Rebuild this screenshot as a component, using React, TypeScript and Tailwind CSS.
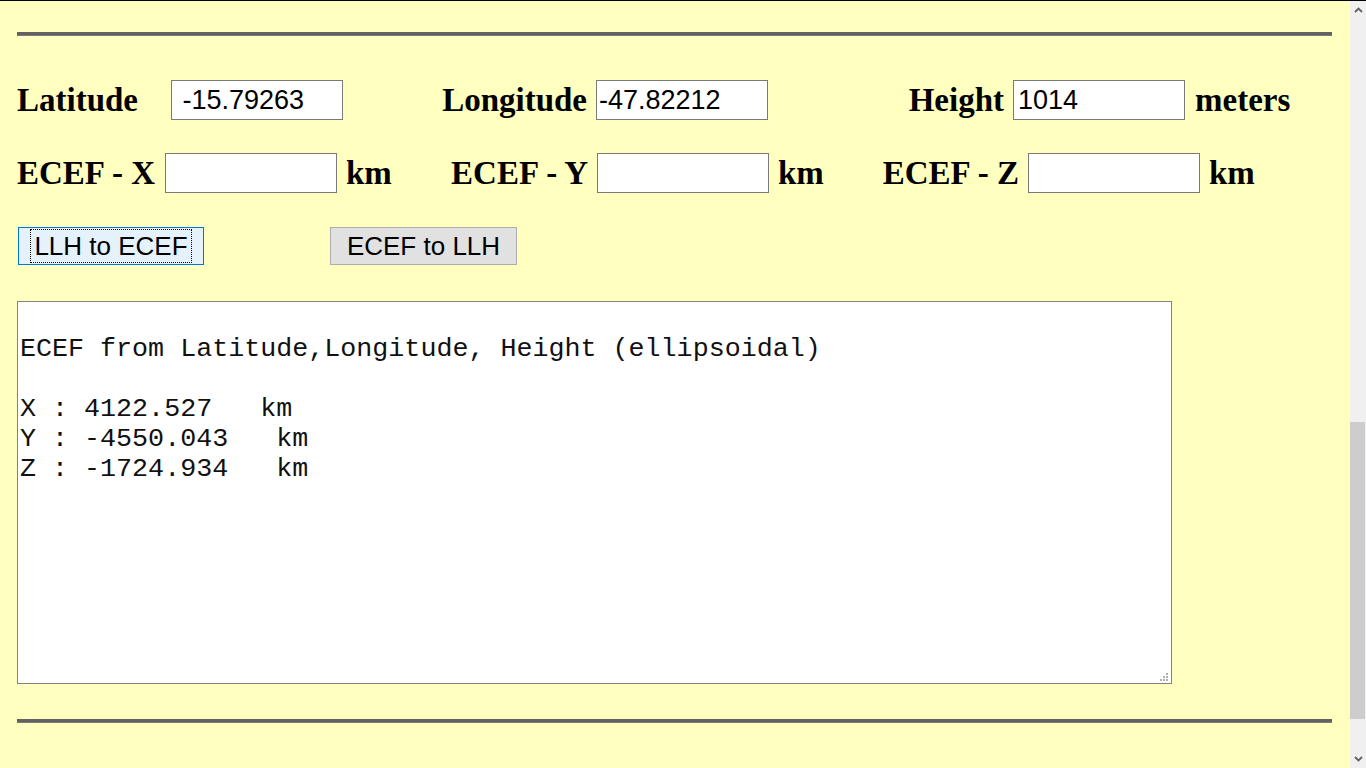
import React from "react";

const serif = "font-['Liberation_Serif',_'Times_New_Roman',_serif]";
const sans = "font-['Liberation_Sans',_Arial,_sans-serif]";

function Field({ value, pad = "pl-[3px]" }: { value?: string; pad?: string }) {
  return (
    <input
      type="text"
      defaultValue={value}
      className={`w-[172px] h-[40px] bg-white border border-[#7a7a7a] text-[27px] font-normal text-black outline-none ${pad} ${sans}`}
    />
  );
}

function Hr() {
  return <div className="h-[4px] bg-[#626262] border-b border-[#7a7a7a]" />;
}

function ScrollBar() {
  return (
    <div className="w-[16px] bg-[#f0f0f0] flex flex-col">
      <div className="h-[18px] flex items-center justify-center">
        <svg width="9" height="6" viewBox="0 0 9 6">
          <path d="M1 5 L4.5 1.5 L8 5" fill="none" stroke="#606060" strokeWidth="1.8" />
        </svg>
      </div>
      <div className="h-[403px]" />
      <div className="h-[297px] w-[15px] bg-[#cdcdcd]" />
      <div className="flex-1" />
      <div className="h-[18px] flex items-center justify-center">
        <svg width="9" height="6" viewBox="0 0 9 6">
          <path d="M1 1 L4.5 4.5 L8 1" fill="none" stroke="#606060" strokeWidth="1.8" />
        </svg>
      </div>
    </div>
  );
}

const output =
  "\nECEF from Latitude,Longitude, Height (ellipsoidal)\n\nX : 4122.527   km\nY : -4550.043   km\nZ : -1724.934   km";

export default function App() {
  return (
    <div className="w-[1366px] h-[768px] flex flex-col overflow-hidden">
      <div className="h-px bg-black" />
      <div className="flex flex-1">
        <div className="flex-1 bg-[#ffffc0] pl-[17px] pr-[18px] pt-[31px]">
          <Hr />

          <div className={`flex items-center mt-[44px] h-[40px] text-[33px] font-bold text-black ${serif}`}>
            <span className="w-[154px] pt-[2px]">Latitude</span>
            <Field value=" -15.79263" />
            <span className="w-[253px] text-right pr-[9px] pt-[2px]">Longitude</span>
            <Field value="-47.82212" pad="pl-[2px]" />
            <span className="w-[245px] text-right pr-[9px] pt-[2px]">Height</span>
            <Field value="1014" pad="pl-[4px]" />
            <span className="pl-[10px] pt-[2px]">meters</span>
          </div>

          <div className={`flex items-center mt-[33px] h-[40px] text-[33px] font-bold text-black ${serif}`}>
            <span className="w-[148px] pt-[2px]">ECEF - X</span>
            <Field />
            <span className="w-[260px] flex justify-between pl-[9px] pr-[9px] pt-[2px]">
              <span>km</span>
              <span>ECEF - Y</span>
            </span>
            <Field />
            <span className="w-[259px] flex justify-between pl-[9px] pr-[9px] pt-[2px]">
              <span>km</span>
              <span>ECEF - Z</span>
            </span>
            <Field />
            <span className="pl-[9px] pt-[2px]">km</span>
          </div>

          <div className={`flex items-center mt-[34px] pl-px ${sans}`}>
            <button className="w-[186px] h-[38px] bg-[#e5f1fb] border border-[#0078d7] text-[26px] text-black flex items-center justify-center">
              <span className="outline-1 outline-dotted outline-black px-[3px] leading-[32px]">LLH to ECEF</span>
            </button>
            <button className="ml-[126px] w-[187px] h-[38px] bg-[#e1e1e1] border border-[#adadad] text-[26px] text-black flex items-center justify-center">
              <span className="leading-[32px]">ECEF to LLH</span>
            </button>
          </div>

          <div className="relative mt-[36px] w-[1155px] h-[383px]">
            <textarea
              readOnly
              value={output}
              className="w-full h-full resize-none bg-white border border-[#828282] p-[2px] text-[26.7px] leading-[30px] text-[#111] outline-none font-['Liberation_Mono',_'Courier_New',_monospace]"
            />
            <svg className="absolute right-[4px] bottom-[3px]" width="8" height="8" viewBox="0 0 8 8">
              <rect x="6" y="0" width="2" height="2" fill="#b0b0b0" />
              <rect x="3" y="3" width="2" height="2" fill="#b0b0b0" />
              <rect x="6" y="3" width="2" height="2" fill="#b0b0b0" />
              <rect x="0" y="6" width="2" height="2" fill="#b0b0b0" />
              <rect x="3" y="6" width="2" height="2" fill="#b0b0b0" />
              <rect x="6" y="6" width="2" height="2" fill="#b0b0b0" />
            </svg>
          </div>

          <div className="mt-[35px]">
            <Hr />
          </div>
        </div>
        <ScrollBar />
      </div>
    </div>
  );
}
